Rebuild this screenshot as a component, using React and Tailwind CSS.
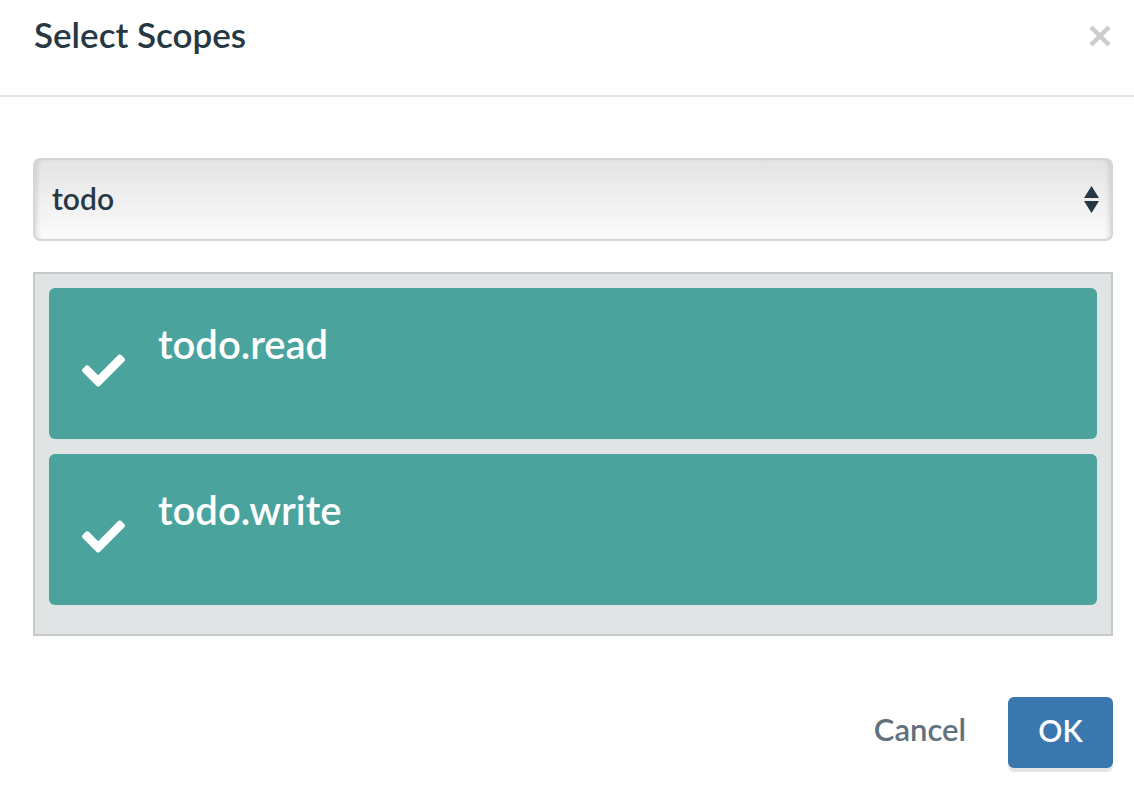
import { FaCheck } from 'react-icons/fa';

const scopes = ['todo.read', 'todo.write'];

function SortArrows() {
  return (
    <svg width="15" height="27" viewBox="0 0 15 27" className="shrink-0">
      <path d="M7.5 0 L15 12 L0 12 Z" fill="#263843" />
      <path d="M0 15 L15 15 L7.5 27 Z" fill="#263843" />
    </svg>
  );
}

export default function App() {
  return (
    <div className="min-h-screen bg-white text-[#263843]" style={{ fontFamily: 'Lato, "Noto Sans", sans-serif' }}>
      <div className="flex h-[97px] items-start justify-between border-b-2 border-[#e3e6e8] pl-[34px] pr-[23px] pt-[17px]">
        <h1 className="text-[35px] font-semibold leading-none">Select Scopes</h1>
        <svg width="22" height="22" viewBox="0 0 22 22" className="mt-[8px]">
          <path d="M2 2 L20 20 M20 2 L2 20" stroke="#cccccc" strokeWidth="4.5" />
        </svg>
      </div>

      <div className="pl-[33px] pr-[21px] pt-[61px]">
        <div className="flex h-[83px] items-center justify-between rounded-[7px] border-2 border-[#d4d7d7] bg-gradient-to-b from-[#e4e4e4] to-[#fbfbfb] pl-[17px] pr-[12px] shadow-[inset_5px_0_5px_-3px_rgba(0,0,0,0.12),inset_-5px_0_5px_-3px_rgba(0,0,0,0.12)]">
          <span className="pb-[4px] text-[30px] font-semibold leading-none">todo</span>
          <SortArrows />
        </div>

        <div className="mt-[31px] border-2 border-[#c7cacb] bg-[#e0e4e5] px-[14px] pb-[14px] pt-[14px]">
          {scopes.map((s) => (
            <div key={s} className="mb-[15px] flex h-[151px] rounded-[6px] bg-[#4aa39d] pl-[33px] text-white">
              <FaCheck className="mt-[61px] shrink-0" size={43} />
              <span className="ml-[33px] mt-[36px] text-[40px] font-semibold leading-none">{s}</span>
            </div>
          ))}
        </div>

        <div className="mt-[61px] flex items-center justify-end gap-[42px]">
          <button className="pb-[7px] text-[31px] font-semibold leading-none text-[#5f727d]">Cancel</button>
          <button className="h-[71px] w-[105px] rounded-[6px] bg-[#3a77ae] pb-[6px] text-[30px] font-semibold leading-none text-white shadow-[0_4px_0_#e4e6e6]">
            OK
          </button>
        </div>
      </div>
    </div>
  );
}
